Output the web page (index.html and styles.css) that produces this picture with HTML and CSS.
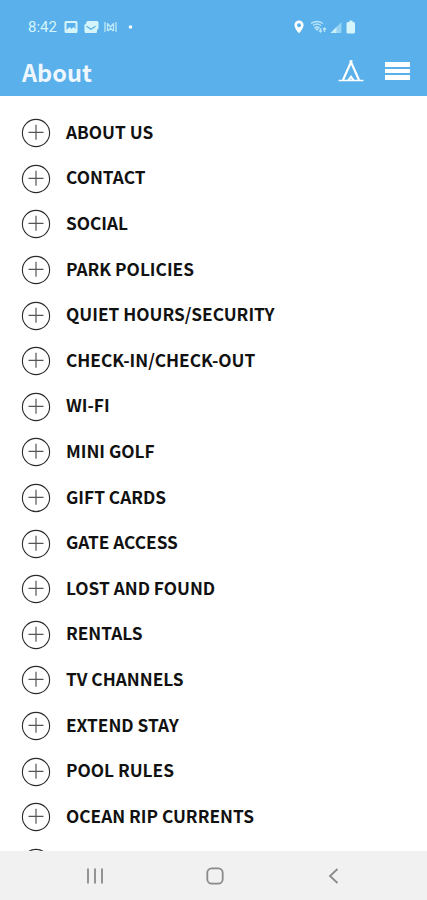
FILE: index.html
```html
<!DOCTYPE html>
<html lang="en">
<head>
    <meta charset="UTF-8">
    <meta name="viewport" content="width=device-width, initial-scale=1.0">
    <title>About</title>
    <link rel="stylesheet" href="styles.css">
</head>
<body>
    <!-- Shared icon -->
    <svg width="0" height="0" class="defs">
        <symbol id="plus" viewBox="0 0 30 30">
            <circle cx="15" cy="15" r="13.6" fill="none" stroke="#2b2b2b" stroke-width="1.1"/>
            <path d="M7.5 14.3h15M15 6.8v15" fill="none" stroke="#555" stroke-width="1.2"/>
        </symbol>
    </svg>

    <!-- Header Section -->
    <header class="header">
        <div class="status">
            <span class="time">8:42</span>
            <svg class="notifications" width="72" height="14" viewBox="0 0 72 14">
                <path fill="currentColor" fill-rule="evenodd" d="M2 1h10q1.500 0 1.500 1.500v9q0 1.500-1.500 1.500H2Q.5 13 .5 11.500v-9Q.5 1 2 1zM2.500 3v7l3-3 2 2 2-2 2 2V3z"/>
                <path fill="currentColor" fill-rule="evenodd" d="M24 1h9q1.500 0 1.500 1.500V8q0 1.500-1.500 1.500V12q0 1-1 1H22q-1.500 0-1.500-1.500V5Q20.500 4 22 4 22 1 24 1zM22.500 5.500v1.500l4.500 3 4.500-3V5.500l-4.500 3z"/>
                <path fill="none" stroke="currentColor" stroke-width="1.300" opacity=".8" d="M41 2v10M43.500 3v8M44 4l2.500 3L49 4M44 11l2.500-3 2.500 3M49.500 3v8M52 2v10"/>
                <circle cx="66.500" cy="7" r="1.800" fill="#fff"/>
            </svg>
            <svg class="signals" width="64" height="14" viewBox="0 0 64 14">
                <path fill="#fff" fill-rule="evenodd" d="M6 .5a4.600 4.600 0 0 1 4.600 4.600C10.600 8.500 6 13.500 6 13.500S1.400 8.500 1.400 5.100A4.600 4.600 0 0 1 6 .5zM6 3.300a2 2 0 1 0 0 4 2 2 0 0 0 0-4z"/>
                <path fill="none" stroke="currentColor" stroke-width="1.300" opacity=".75" d="M18 3.500q6-4 12 0M20 5.500q4-3 8 0M22 7.500q2-1.500 4 0L24 10zM27.500 8v4M26 10.500l1.500 1.500 1.500-1.500M31.500 12V8M30 9.500L31.500 8 33 9.500"/>
                <path fill="currentColor" opacity=".5" d="M48.500 2v11H37.500z"/>
                <path fill="currentColor" opacity=".8" d="M43.500 7v6h-6z"/>
                <path fill="currentColor" d="M56.500 .5h3V2h1q1.500 0 1.500 1.500v8.500q0 1.500-1.500 1.500h-5.500q-1.500 0-1.500-1.500V3.500Q53.500 2 55 2h1.500z"/>
            </svg>
        </div>
        <div class="toolbar">
            <h1>About</h1>
            <button class="tent" aria-label="Campground">
                <svg width="26" height="22" viewBox="0 0 26 22">
                    <path fill="none" stroke="#fff" stroke-width="2.200" d="M12.200 .3L21 20M13.800 .3L5 20"/>
                    <path fill="none" stroke="#fff" stroke-width="1.500" d="M.5 20.500h25"/>
                    <path fill="#fff" d="M13 15l4 5.500h-2.800L13 18.500l-1.200 2H9z"/>
                </svg>
            </button>
            <button class="menu" aria-label="Menu">
                <span></span>
                <span></span>
                <span></span>
            </button>
        </div>
    </header>

    <!-- Topics -->
    <main class="content">
        <ul class="topics">
            <li><svg class="plus"><use href="#plus"/></svg><span>ABOUT US</span></li>
            <li><svg class="plus"><use href="#plus"/></svg><span>CONTACT</span></li>
            <li><svg class="plus"><use href="#plus"/></svg><span>SOCIAL</span></li>
            <li><svg class="plus"><use href="#plus"/></svg><span>PARK POLICIES</span></li>
            <li><svg class="plus"><use href="#plus"/></svg><span>QUIET HOURS/SECURITY</span></li>
            <li><svg class="plus"><use href="#plus"/></svg><span>CHECK-IN/CHECK-OUT</span></li>
            <li><svg class="plus"><use href="#plus"/></svg><span>WI-FI</span></li>
            <li><svg class="plus"><use href="#plus"/></svg><span>MINI GOLF</span></li>
            <li><svg class="plus"><use href="#plus"/></svg><span>GIFT CARDS</span></li>
            <li><svg class="plus"><use href="#plus"/></svg><span>GATE ACCESS</span></li>
            <li><svg class="plus"><use href="#plus"/></svg><span>LOST AND FOUND</span></li>
            <li><svg class="plus"><use href="#plus"/></svg><span>RENTALS</span></li>
            <li><svg class="plus"><use href="#plus"/></svg><span>TV CHANNELS</span></li>
            <li><svg class="plus"><use href="#plus"/></svg><span>EXTEND STAY</span></li>
            <li><svg class="plus"><use href="#plus"/></svg><span>POOL RULES</span></li>
            <li><svg class="plus"><use href="#plus"/></svg><span>OCEAN RIP CURRENTS</span></li>
            <li><svg class="plus"><use href="#plus"/></svg></li>
        </ul>
    </main>

    <!-- Navigation Bar -->
    <nav class="navbar">
        <svg width="18" height="18" viewBox="0 0 18 18"><path d="M2 1.500v15M9 1.500v15M16 1.500v15"/></svg>
        <svg width="18" height="18" viewBox="0 0 18 18"><rect x="1.300" y="1.300" width="15.400" height="15.400" rx="4.500"/></svg>
        <svg width="18" height="18" viewBox="0 0 18 18"><path d="M12.500 2L5 9l7.500 7"/></svg>
    </nav>
</body>
</html>
```
FILE: styles.css
```css
/* General Styles */
* {
    box-sizing: border-box;
}

body {
    margin: 0;
    height: 100vh;
    display: flex;
    flex-direction: column;
    overflow: hidden;
    background: #fff;
    color: #111;
    font-family: "Noto Sans CJK SC", "Open Sans", sans-serif;
}

svg {
    display: block;
    flex: none;
}

.defs {
    position: absolute;
}

/* Header Styles */
.header {
    flex: none;
    height: 96px;
    background: #59b0ea;
    color: #d5f5fb;
}

.status {
    display: flex;
    align-items: center;
    height: 54px;
    padding: 0 70px 0 28px;
}

.time {
    width: 36px;
    font-family: Roboto, sans-serif;
    font-size: 15px;
    line-height: 18px;
}

.signals {
    margin-left: auto;
}

.toolbar {
    display: flex;
    align-items: center;
    height: 34px;
    padding: 0 17px 0 22px;
}

.toolbar h1 {
    margin: 2px auto 0 0;
    font-size: 23.500px;
    line-height: 34px;
    font-weight: bold;
    color: #eef6ff;
}

.toolbar button {
    padding: 0;
    border: none;
    background: none;
}

.menu {
    display: flex;
    flex-direction: column;
    gap: 2px;
    width: 25px;
    margin-left: 21px;
}

.menu span {
    height: 4.700px;
    background: #fff;
}

/* Topic List */
.content {
    flex: 1;
    min-height: 0;
    overflow: hidden;
}

.topics {
    margin: 0;
    padding: 14.500px 21px 0;
    list-style: none;
}

.topics li {
    display: flex;
    align-items: center;
    gap: 15px;
    height: 45.600px;
    font-size: 17.250px;
    line-height: 24px;
    font-weight: bold;
}

.topics span {
    margin-bottom: 3px;
}

.plus {
    width: 30px;
    height: 30px;
}

/* Navigation Bar */
.navbar {
    flex: none;
    display: flex;
    justify-content: space-between;
    height: 49px;
    padding: 16px 84px 0 86px;
    background: #f1f1f1;
}

.navbar svg {
    fill: none;
    stroke: #8a8a8a;
    stroke-width: 1.800;
}
```
